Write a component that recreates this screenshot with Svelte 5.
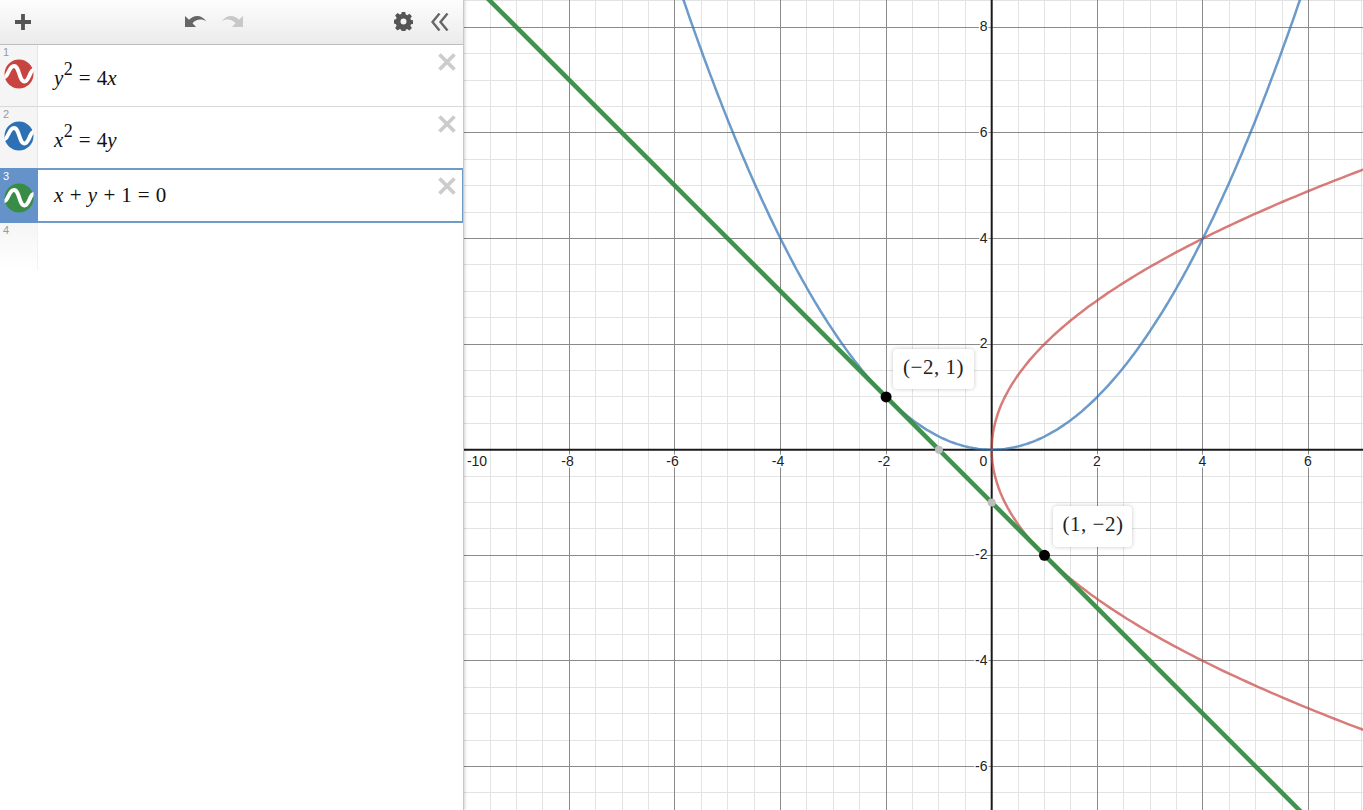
<script>
  const U = 52.8, OX = 527.7, OY = 449.7, W = 899, H = 810;
  const px = (x) => OX + x * U;
  const py = (y) => OY - y * U;
  const snap = (v) => Math.floor(v) + 0.5;

  const minorX = [], majorX = [], minorY = [], majorY = [];
  for (let i = -20; i <= 20; i++) {
    const x = px(i / 2);
    if (i !== 0 && x > 0 && x < W) (i % 4 === 0 ? majorX : minorX).push(snap(x));
  }
  for (let i = -20; i <= 20; i++) {
    const y = py(i / 2);
    if (i !== 0 && y > 0 && y < H) (i % 4 === 0 ? majorY : minorY).push(snap(y));
  }

  const toPath = (pts) => pts.map((p, i) => (i ? 'L' : 'M') + p[0].toFixed(1) + ' ' + p[1].toFixed(1)).join('');
  const red = [], blue = [];
  for (let t = -8; t <= 8; t += 0.05) {
    red.push([px((t * t) / 4), py(t)]);
    blue.push([px(t), py((t * t) / 4)]);
  }
  const redPath = toPath(red), bluePath = toPath(blue);
  const greenPath = toPath([[px(-11), py(10)], [px(8), py(-9)]]);

  const xLabels = [
    { t: '-10', x: 13 }, { t: '-8', x: 103.5 }, { t: '-6', x: 208.5 }, { t: '-4', x: 314 }, { t: '-2', x: 420 },
    { t: '2', x: 633 }, { t: '4', x: 738.5 }, { t: '6', x: 844 }, { t: '0', x: 519.5 }
  ];
  const yLabels = [8, 6, 4, 2, -2, -4, -6];

  const rows = [
    { n: 1, color: '#c74440' },
    { n: 2, color: '#2d70b3' },
    { n: 3, color: '#388c46' }
  ];
</script>

<div class="page">
  <aside class="panel">
    <header class="toolbar">
      <svg class="plus" width="18" height="18" viewBox="0 0 18 18"><path d="M9 1v16M1 9h16" /></svg>
      <div class="history">
        <svg width="24" height="18" viewBox="0 0 24 18"><path class="undo" d="M1 3v11h11L8.500 10.300C12 6 18 5.500 22.500 8.500 18 1.500 10 1.200 5 6.800z" /></svg>
        <svg width="24" height="18" viewBox="0 0 24 18"><path class="redo" d="M23 3v11H12l3.500-3.700C12 6 6 5.500 1.500 8.500 6 1.500 14 1.200 19 6.800z" /></svg>
      </div>
      <div class="right-tools">
        <svg width="19" height="19" viewBox="0 0 24 24"><path class="gear" fill-rule="evenodd" d="M9.800 0h4.400l.6 3.300 1.900.8 2.800-1.900 3.100 3.100-1.900 2.800.8 1.900 3.300.6v4.400l-3.300.6-.8 1.900 1.900 2.800-3.100 3.100-2.800-1.900-1.900.8-.6 3.300H9.800l-.6-3.300-1.900-.8-2.800 1.900-3.100-3.100 1.900-2.800-.8-1.900L-.8 14.200V9.800l3.300-.6.800-1.900L1.400 4.500 4.500 1.400l2.800 1.900 1.900-.8zM12 8.200a3.800 3.800 0 1 0 0 7.600 3.800 3.800 0 0 0 0-7.600z" /></svg>
        <svg width="18" height="18" viewBox="0 0 18 18"><path class="chev" d="M8.500 .5 1.500 9l7 8.500M16.500 .5 9.500 9l7 8.500" /></svg>
      </div>
    </header>

    {#each rows as row}
      <div class="row" class:selected={row.n === 3}>
        <div class="gutter">
          <span class="num">{row.n}</span>
          <svg class="badge" width="30" height="30" viewBox="0 0 30 30">
            <circle cx="15" cy="15" r="14.500" fill={row.color} />
            <path class="wave" d="M.5 18C4 18 5 7 10 7c5.500 0 5 15.500 10.500 15.500 4.500 0 5.500-11.500 9-11.500" />
          </svg>
        </div>
        <div class="math">
          {#if row.n === 1}
            <i>y</i><sup>2</sup><span class="op">=</span>4<i>x</i>
          {:else if row.n === 2}
            <i>x</i><sup>2</sup><span class="op">=</span>4<i>y</i>
          {:else}
            <i>x</i><span class="op">+</span><i>y</i><span class="op">+</span>1<span class="op">=</span>0
          {/if}
        </div>
        <svg class="close" width="18" height="18" viewBox="0 0 18 18"><path d="M1.500 1.500l15 15M16.500 1.500l-15 15" /></svg>
      </div>
    {/each}

    <div class="row empty">
      <div class="gutter"><span class="num">4</span></div>
    </div>
  </aside>

  <main class="graph">
    <svg class="canvas" width={W} height={H} viewBox="0 0 {W} {H}">
      <g class="minor">
        {#each minorX as x}<line x1={x} x2={x} y1="0" y2={H} />{/each}
        {#each minorY as y}<line x1="0" x2={W} y1={y} y2={y} />{/each}
      </g>
      <g class="major">
        {#each majorX as x}<line x1={x} x2={x} y1="0" y2={H} />{/each}
        {#each majorY as y}<line x1="0" x2={W} y1={y} y2={y} />{/each}
      </g>
      <g class="axes">
        <line x1={OX} x2={OX} y1="0" y2={H} />
        <line x1="0" x2={W} y1={OY} y2={OY} />
      </g>
      <g class="ticks">
        {#each xLabels as l}<text x={l.x} y="466" text-anchor="middle">{l.t}</text>{/each}
        {#each yLabels as v}<text x="523.500" y={py(v) + 4} text-anchor="end">{v}</text>{/each}
      </g>
      <path class="curve" d={redPath} stroke="#c74440" />
      <path class="curve" d={bluePath} stroke="#2d70b3" />
      <path class="line" d={greenPath} />
      <circle class="hole" cx={px(-1)} cy={py(0)} r="4" />
      <circle class="hole" cx={px(0)} cy={py(-1)} r="4" />
      <circle cx={px(-2)} cy={py(1)} r="5.500" />
      <circle cx={px(1)} cy={py(-2)} r="5.500" />
    </svg>
    <div class="tip tip-a">(−2, 1)</div>
    <div class="tip tip-b">(1, −2)</div>
  </main>
</div>

<style>
  :global(body) { margin: 0; background: #fff; overflow: hidden; }
  .page { display: flex; width: 1363px; height: 810px; overflow: hidden; }
  .panel {
    width: 463px; flex: none; background: #fff; position: relative; z-index: 2;
    border-right: 1px solid #c8c8c8; box-shadow: 1px 0 3px rgba(0,0,0,.18);
    box-sizing: content-box;
  }
  .toolbar {
    height: 45px; box-sizing: border-box; display: flex; align-items: center;
    padding: 0 14px 1px 14px;
    background: linear-gradient(#fdfdfd, #ebebeb);
    border-bottom: 1px solid #bdbdbd;
  }
  .toolbar svg { display: block; }
  .plus path { fill: none; stroke: #555; stroke-width: 3.800; }
  .history { display: flex; gap: 12px; margin-left: 152px; }
  .undo { fill: #666; }
  .redo { fill: #c8c8c8; }
  .right-tools { display: flex; align-items: center; gap: 18px; margin-left: auto; }
  .gear { fill: #555; }
  .chev { fill: none; stroke: #666; stroke-width: 2.400; }

  .row {
    height: 62px; box-sizing: border-box; position: relative; display: flex;
    border-bottom: 1px solid #d9d9d9;
  }
  .gutter {
    width: 38px; flex: none; background: #f5f5f5; border-right: 1px solid #e6e6e6; box-sizing: border-box;
    position: relative;
  }
  .num {
    position: absolute; left: 3px; top: 1px; font: 11px "Liberation Sans", sans-serif; color: #999;
  }
  .badge { position: absolute; left: 4px; top: 14px; }
  .wave { fill: none; stroke: #fff; stroke-width: 4; }
  .math {
    font-family: "Liberation Serif", serif; font-size: 21px; color: #111; margin-left: 16px;
    padding-top: 20px; white-space: nowrap; line-height: 26px;
  }
  .math i { margin-right: .5px; }
  .math sup { font-size: 18px; line-height: 0; vertical-align: 10px; }
  .op { margin: 0 6px; }
  .close { position: absolute; right: 7px; top: 8px; }
  .close path { fill: none; stroke: #ccc; stroke-width: 3.800; }

  .selected { height: 55px; border: 0; border-top: 2px solid #6f9cc7; border-bottom: 2px solid #6f9cc7; border-right: 1px solid #6f9cc7; margin-top: -1px; }
  .selected .gutter { background: #6492c9; border: 0; margin: -2px 0; height: 55px; }
  .selected .num { color: #fff; top: 2px; }
  .selected .badge { top: 15px; }
  .selected .math { padding-top: 12px; }
  .selected .close { top: 7px; right: 6px; }

  .empty { height: 47px; border: 0; }
  .empty .gutter { background: linear-gradient(#f5f5f5, #fff); border-right-color: #f2f2f2; }

  .graph { position: relative; flex: 1; min-width: 0; overflow: hidden; }
  .canvas { display: block; }
  .minor line { stroke: #e3e3e3; stroke-width: 1; }
  .major line { stroke: #8a8a8a; stroke-width: 1; }
  .axes line { stroke: #1a1a1a; stroke-width: 2; }
  .ticks text {
    font: 14px "Liberation Sans", sans-serif; fill: #222; stroke: #fff; stroke-width: 3; paint-order: stroke;
  }
  .curve { fill: none; stroke-width: 2.500; opacity: .7; }
  .line { fill: none; stroke: #388c46; stroke-width: 4.500; opacity: .95; }
  .hole { fill: #bdbdbd; }
  .tip {
    position: absolute; background: #fff; border-radius: 4px; box-shadow: 0 0 4px rgba(0,0,0,.22);
    font: 21px "Liberation Serif", serif; color: #222; display: flex; align-items: center; justify-content: center;
    white-space: nowrap; letter-spacing: .5px; padding-bottom: 4px; box-sizing: border-box;
  }
  .tip-a { left: 429px; top: 349px; width: 81px; height: 40px; }
  .tip-b { left: 589px; top: 506px; width: 79px; height: 41px; padding-left: 1px; }
</style>
